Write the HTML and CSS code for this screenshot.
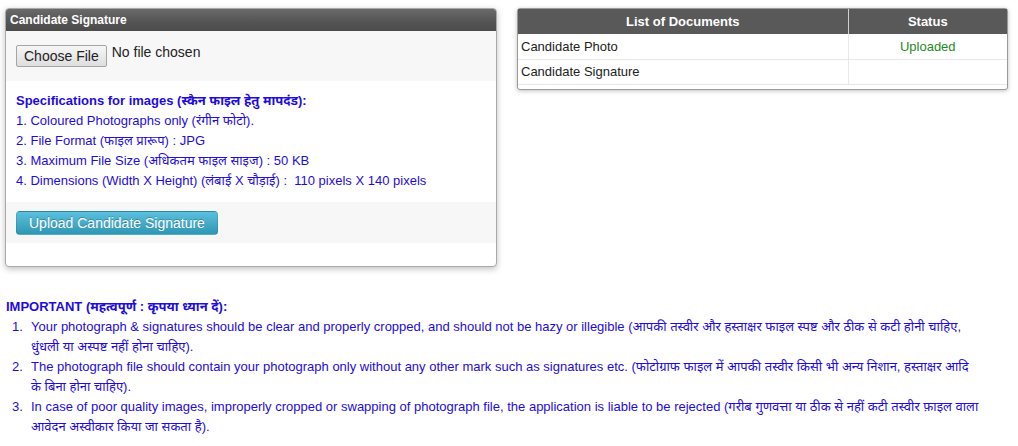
FILE: index.html
```html
<!DOCTYPE html>
<html lang="en">

<head>
  <meta charset="UTF-8">
  <meta name="viewport" content="width=device-width, initial-scale=1.0">
  <title>Upload Documents</title>
  <link rel="stylesheet" href="styles.css">
</head>

<body>

  <div class="page">

    <div class="top">
      <!-- Signature upload panel -->
      <div class="panel">
        <div class="panel-head">Candidate Signature</div>

        <div class="file-row">
          <label class="choose-btn">Choose File<input type="file" hidden></label>
          <span class="file-name">No file chosen</span>
        </div>

        <div class="specs">
          <p class="specs-title">Specifications for images (स्कैन फाइल हेतु मापदंड):</p>
          <p>1. Coloured Photographs only (रंगीन फोटो).</p>
          <p>2. File Format (फाइल प्रारूप) : JPG</p>
          <p>3. Maximum File Size (अधिकतम फाइल साइज) : 50 KB</p>
          <p>4. Dimensions (Width X Height) (लंबाई X चौड़ाई) : &nbsp;110 pixels X 140 pixels</p>
        </div>

        <div class="actions">
          <button class="upload-btn">Upload Candidate Signature</button>
        </div>
      </div>

      <!-- Documents status -->
      <div class="docs">
        <table>
          <tr>
            <th class="col-doc">List of Documents</th>
            <th class="col-status">Status</th>
          </tr>
          <tr>
            <td>Candidate Photo</td>
            <td class="status"><span class="uploaded">Uploaded</span></td>
          </tr>
          <tr>
            <td>Candidate Signature</td>
            <td class="status"></td>
          </tr>
        </table>
      </div>
    </div>

    <!-- Important notes -->
    <div class="notice">
      <p class="notice-title">IMPORTANT (महत्वपूर्ण : कृपया ध्यान दें):</p>
      <ol>
        <li>Your photograph &amp; signatures should be clear and properly cropped, and should not be hazy or illegible (आपकी तस्वीर और हस्ताक्षर फाइल स्पष्ट और ठीक से कटी होनी चाहिए, धुंधली या अस्पष्ट नहीं होना चाहिए).</li>
        <li>The photograph file should contain your photograph only without any other mark such as signatures etc. (फोटोग्राफ फाइल में आपकी तस्वीर किसी भी अन्य निशान, हस्ताक्षर आदि के बिना होना चाहिए).</li>
        <li>In case of poor quality images, improperly cropped or swapping of photograph file, the application is liable to be rejected (गरीब गुणवत्ता या ठीक से नहीं कटी तस्वीर फ़ाइल वाला आवेदन अस्वीकार किया जा सकता है).</li>
      </ol>
    </div>

  </div>

</body>

</html>
```

FILE: styles.css
```css
/* Global Styles */
* {
  margin: 0;
  padding: 0;
  box-sizing: border-box;
}

body {
  font-family: 'Liberation Sans', Arial, 'Noto Sans Devanagari', 'Lohit Devanagari', FreeSans, sans-serif;
  font-size: 13px;
  color: #333;
  background: #fff;
}

.page {
  padding: 8px 8px 0 5px;
}

.top {
  display: flex;
  align-items: flex-start;
  gap: 20px;
}

/* Left panel */
.panel {
  width: 492px;
  border: 1px solid #a9a9a9;
  border-radius: 4px;
  box-shadow: 0 2px 6px rgba(0, 0, 0, 0.25);
  padding-bottom: 23px;
  background: #fff;
}

.panel-head {
  height: 22px;
  line-height: 22px;
  padding-left: 4px;
  color: #fff;
  font-size: 12px;
  font-weight: bold;
  background: linear-gradient(#6a6a6a, #555 55%, #4b4b4b);
  border-radius: 3px 3px 0 0;
}

.file-row {
  display: flex;
  align-items: flex-start;
  gap: 5px;
  height: 50px;
  padding: 14px 10px 0;
  background: #f7f7f7;
  font-size: 14px;
}

.choose-btn {
  padding: 1px 7px;
  line-height: 18px;
  color: #222;
  background: linear-gradient(#f6f6f6, #dedede);
  border: 1px solid #a5a5a5;
  border-radius: 2px;
  cursor: pointer;
}

.file-name {
  line-height: 16px;
  margin-top: -1px;
  color: #222;
}

.specs {
  padding: 10px 10px 11px;
  color: #1e0be0;
  line-height: 20px;
}

.specs-title {
  font-weight: bold;
}

.actions {
  height: 41px;
  padding: 9px 10px 0;
  background: #f7f7f7;
}

.upload-btn {
  height: 24px;
  padding: 0 12px;
  font-family: inherit;
  font-size: 14px;
  color: #fff;
  text-shadow: 0 -1px 0 rgba(0, 0, 0, 0.25);
  background: linear-gradient(#5bc0de, #2f96b4);
  border: 1px solid rgba(0, 0, 0, 0.1);
  border-radius: 4px;
  cursor: pointer;
}

/* Documents table */
.docs {
  width: 491px;
  border: 1px solid #9a9a9a;
  border-radius: 3px;
  box-shadow: 0 1px 4px rgba(0, 0, 0, 0.25);
  padding-bottom: 4px;
  background: #fff;
}

table {
  width: 100%;
  border-collapse: collapse;
}

th, td {
  height: 25px;
  padding: 0 3px;
  border-bottom: 1px solid #e8e8e8;
}

th {
  background: #595959;
  color: #fff;
  font-weight: bold;
  text-align: center;
  border-bottom: none;
}

.col-doc {
  width: 330px;
  border-right: 1px solid #d0d0d0;
}

td {
  color: #222;
  text-align: left;
}

td:first-child {
  border-right: 1px solid #e8e8e8;
}

.status {
  text-align: center;
}

.uploaded {
  color: #1f8a1f;
}

/* Important notes */
.notice {
  max-width: 976px;
  margin-top: 30px;
  padding-left: 1px;
  color: #1e0be0;
  line-height: 20px;
}

.notice-title {
  font-weight: bold;
}

ol {
  list-style: none;
  counter-reset: item;
}

ol li {
  counter-increment: item;
  padding-left: 25px;
}

ol li::before {
  content: counter(item) ".";
  display: inline-block;
  width: 10px;
  margin-left: -19px;
  margin-right: 9px;
}
```
